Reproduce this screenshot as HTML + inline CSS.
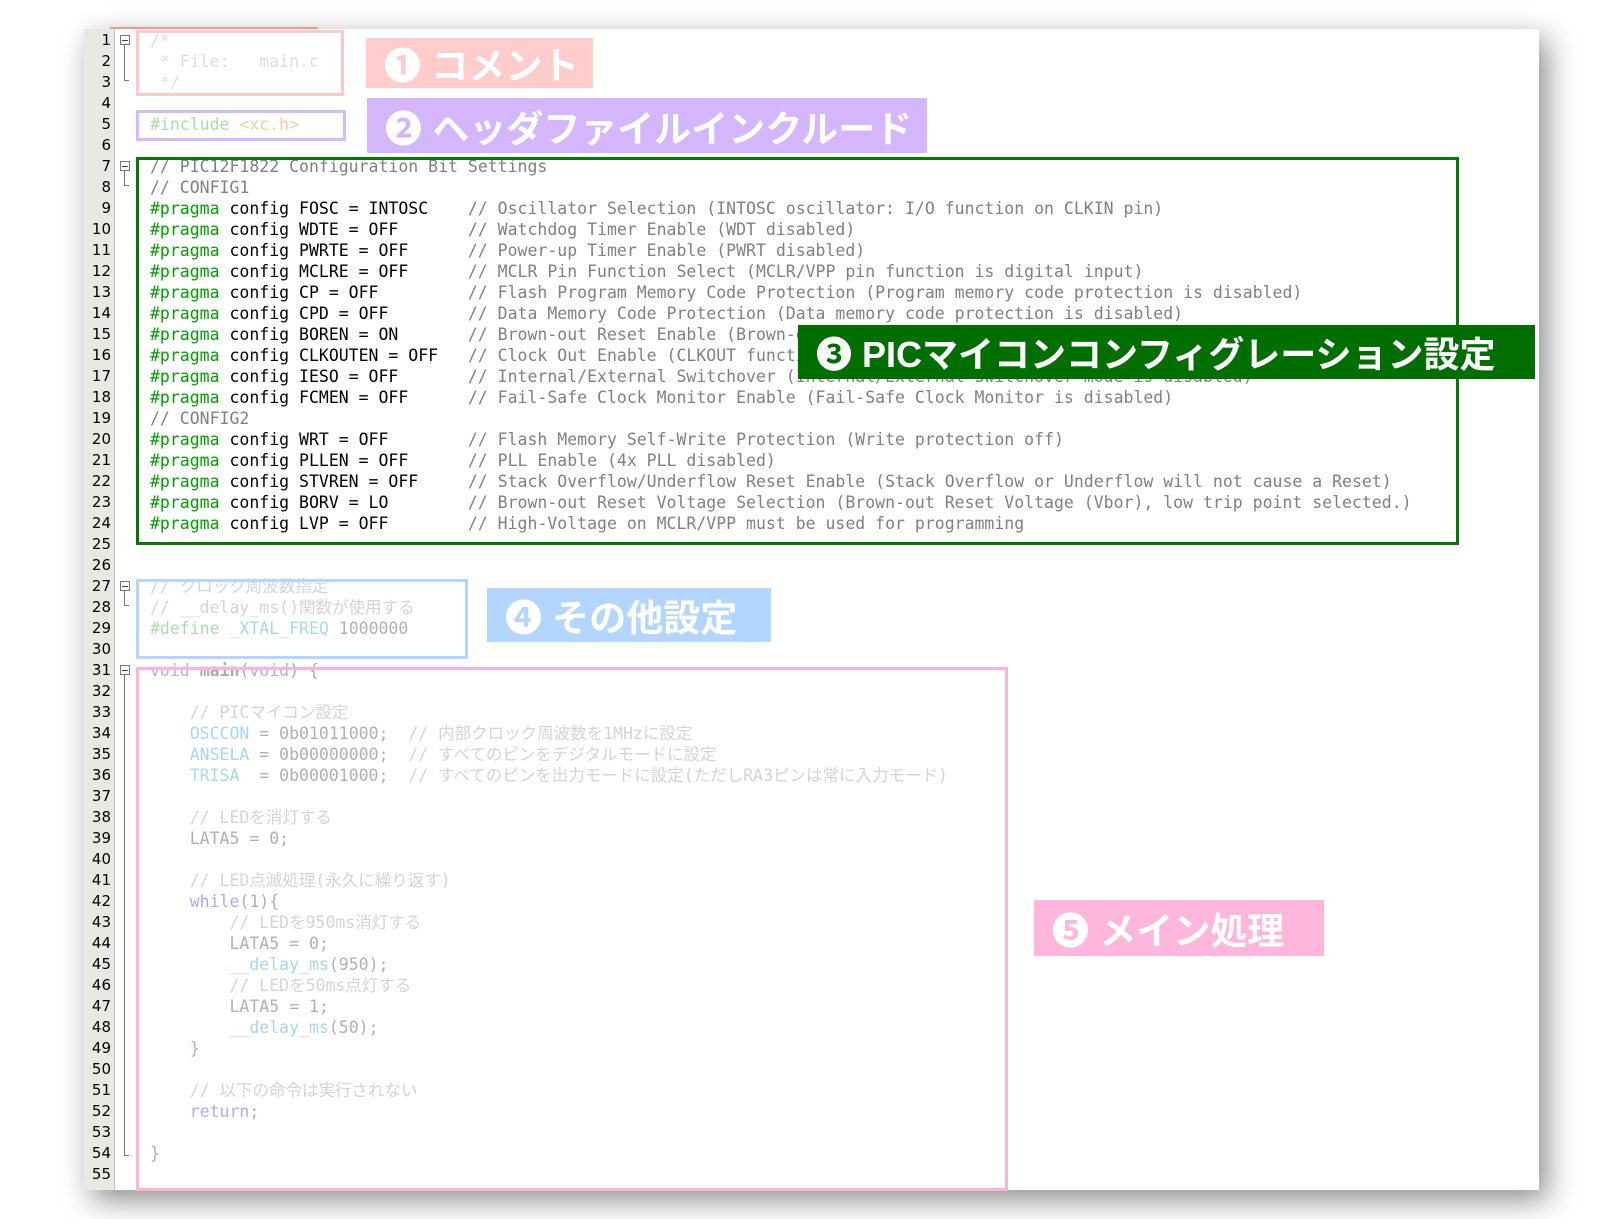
<!DOCTYPE html>
<html><head><meta charset="utf-8"><style>
body{margin:0;width:1624px;height:1219px;background:#fff;position:relative;overflow:hidden;font-family:"DejaVu Sans Mono","Liberation Mono","Noto Sans CJK JP",monospace}
.win{position:absolute;left:84px;top:29px;width:1455px;height:1161px;background:#fff;box-shadow:8px 10px 28px rgba(0,0,0,.45)}
.gut{position:absolute;left:84px;top:29px;width:30px;height:1161px;background:#e9e8e3;border-right:1px solid #c8c8c8}
.ln{position:absolute;left:84px;width:27px;text-align:right;font-size:15px;line-height:21px;color:#000;font-family:"DejaVu Sans",sans-serif}
.l{position:absolute;left:150px;font-size:16.5px;line-height:21px;white-space:pre;color:#000;font-family:"DejaVu Sans Mono","Noto Sans CJK JP",monospace}
.c{color:#808080}.p{color:#00a000}
.cm{position:absolute;left:32ch;color:#808080}
.f1{color:#ddd}.fg{color:#a8dca8}.fo{color:#f2cca4}.fk{color:#aaaaff}.fb{color:#aaa}.fi{color:#a8d6f2}.fn{color:#b0b0b0}.fc{color:#d4d4d4}
.box{position:absolute;box-sizing:border-box}
.lab{position:absolute;color:#fff;font-family:"Liberation Sans","Noto Sans CJK JP",sans-serif;font-weight:bold;font-size:37px;display:flex;align-items:center;padding-left:18px;box-sizing:border-box;white-space:nowrap}
.fold{position:absolute;left:120px;width:8px;height:8px;border:1px solid #777;background:#fff;font-size:8px}
.fold:after{content:"";position:absolute;left:1px;top:3.5px;width:6px;height:1px;background:#444}
.vl{position:absolute;left:124px;width:4px;border-left:1px solid #777;border-bottom:1px solid #777}
</style></head><body>
<div class="win"></div>
<div class="gut"></div>
<div style="position:absolute;left:110px;top:27px;width:208px;height:2px;background:#ff9090"></div>

<div class="ln" style="top:29.5px">1</div><div class="ln" style="top:50.5px">2</div><div class="ln" style="top:71.5px">3</div><div class="ln" style="top:92.5px">4</div><div class="ln" style="top:113.5px">5</div><div class="ln" style="top:134.5px">6</div><div class="ln" style="top:155.5px">7</div><div class="ln" style="top:176.5px">8</div><div class="ln" style="top:197.5px">9</div><div class="ln" style="top:218.5px">10</div><div class="ln" style="top:239.5px">11</div><div class="ln" style="top:260.5px">12</div><div class="ln" style="top:281.5px">13</div><div class="ln" style="top:302.5px">14</div><div class="ln" style="top:323.5px">15</div><div class="ln" style="top:344.5px">16</div><div class="ln" style="top:365.5px">17</div><div class="ln" style="top:386.5px">18</div><div class="ln" style="top:407.5px">19</div><div class="ln" style="top:428.5px">20</div><div class="ln" style="top:449.5px">21</div><div class="ln" style="top:470.5px">22</div><div class="ln" style="top:491.5px">23</div><div class="ln" style="top:512.5px">24</div><div class="ln" style="top:533.5px">25</div><div class="ln" style="top:554.5px">26</div><div class="ln" style="top:575.5px">27</div><div class="ln" style="top:596.5px">28</div><div class="ln" style="top:617.5px">29</div><div class="ln" style="top:638.5px">30</div><div class="ln" style="top:659.5px">31</div><div class="ln" style="top:680.5px">32</div><div class="ln" style="top:701.5px">33</div><div class="ln" style="top:722.5px">34</div><div class="ln" style="top:743.5px">35</div><div class="ln" style="top:764.5px">36</div><div class="ln" style="top:785.5px">37</div><div class="ln" style="top:806.5px">38</div><div class="ln" style="top:827.5px">39</div><div class="ln" style="top:848.5px">40</div><div class="ln" style="top:869.5px">41</div><div class="ln" style="top:890.5px">42</div><div class="ln" style="top:911.5px">43</div><div class="ln" style="top:932.5px">44</div><div class="ln" style="top:953.5px">45</div><div class="ln" style="top:974.5px">46</div><div class="ln" style="top:995.5px">47</div><div class="ln" style="top:1016.5px">48</div><div class="ln" style="top:1037.5px">49</div><div class="ln" style="top:1058.5px">50</div><div class="ln" style="top:1079.5px">51</div><div class="ln" style="top:1100.5px">52</div><div class="ln" style="top:1121.5px">53</div><div class="ln" style="top:1142.5px">54</div><div class="ln" style="top:1163.5px">55</div>

<div class="fold" style="top:35px"></div><div class="vl" style="top:45px;height:35px"></div>
<div class="fold" style="top:161px"></div><div class="vl" style="top:171px;height:14px"></div>
<div class="fold" style="top:581px"></div><div class="vl" style="top:591px;height:14px"></div>
<div class="fold" style="top:665px"></div><div class="vl" style="top:675px;height:480px"></div>

<div class="l f1" style="top:29.5px">/*</div>
<div class="l f1" style="top:50.5px"> * File:   main.c</div>
<div class="l f1" style="top:71.5px"> */</div>
<div class="l" style="top:113.5px"><span class="fg">#include</span> <span class="fo">&lt;xc.h&gt;</span></div>
<div class="l c" style="top:155.5px">// PIC12F1822 Configuration Bit Settings</div>
<div class="l c" style="top:176.5px">// CONFIG1</div>
<div class="l" style="top:197.5px"><span class="p">#pragma</span> config FOSC = INTOSC<span class="cm">// Oscillator Selection (INTOSC oscillator: I/O function on CLKIN pin)</span></div>
<div class="l" style="top:218.5px"><span class="p">#pragma</span> config WDTE = OFF<span class="cm">// Watchdog Timer Enable (WDT disabled)</span></div>
<div class="l" style="top:239.5px"><span class="p">#pragma</span> config PWRTE = OFF<span class="cm">// Power-up Timer Enable (PWRT disabled)</span></div>
<div class="l" style="top:260.5px"><span class="p">#pragma</span> config MCLRE = OFF<span class="cm">// MCLR Pin Function Select (MCLR/VPP pin function is digital input)</span></div>
<div class="l" style="top:281.5px"><span class="p">#pragma</span> config CP = OFF<span class="cm">// Flash Program Memory Code Protection (Program memory code protection is disabled)</span></div>
<div class="l" style="top:302.5px"><span class="p">#pragma</span> config CPD = OFF<span class="cm">// Data Memory Code Protection (Data memory code protection is disabled)</span></div>
<div class="l" style="top:323.5px"><span class="p">#pragma</span> config BOREN = ON<span class="cm">// Brown-out Reset Enable (Brown-out Reset enabled)</span></div>
<div class="l" style="top:344.5px"><span class="p">#pragma</span> config CLKOUTEN = OFF<span class="cm">// Clock Out Enable (CLKOUT function is disabled)</span></div>
<div class="l" style="top:365.5px"><span class="p">#pragma</span> config IESO = OFF<span class="cm">// Internal/External Switchover (Internal/External Switchover mode is disabled)</span></div>
<div class="l" style="top:386.5px"><span class="p">#pragma</span> config FCMEN = OFF<span class="cm">// Fail-Safe Clock Monitor Enable (Fail-Safe Clock Monitor is disabled)</span></div>
<div class="l c" style="top:407.5px">// CONFIG2</div>
<div class="l" style="top:428.5px"><span class="p">#pragma</span> config WRT = OFF<span class="cm">// Flash Memory Self-Write Protection (Write protection off)</span></div>
<div class="l" style="top:449.5px"><span class="p">#pragma</span> config PLLEN = OFF<span class="cm">// PLL Enable (4x PLL disabled)</span></div>
<div class="l" style="top:470.5px"><span class="p">#pragma</span> config STVREN = OFF<span class="cm">// Stack Overflow/Underflow Reset Enable (Stack Overflow or Underflow will not cause a Reset)</span></div>
<div class="l" style="top:491.5px"><span class="p">#pragma</span> config BORV = LO<span class="cm">// Brown-out Reset Voltage Selection (Brown-out Reset Voltage (Vbor), low trip point selected.)</span></div>
<div class="l" style="top:512.5px"><span class="p">#pragma</span> config LVP = OFF<span class="cm">// High-Voltage on MCLR/VPP must be used for programming</span></div>

<div class="l fc" style="top:575.5px">// クロック周波数指定</div>
<div class="l fc" style="top:596.5px">// __delay_ms()関数が使用する</div>
<div class="l" style="top:617.5px"><span class="fg">#define</span> <span class="fi">_XTAL_FREQ</span> <span class="fn">1000000</span></div>

<div class="l" style="top:659.5px"><span class="fk">void</span> <b class="fb">main</b><span class="fb">(</span><span class="fk">void</span><span class="fb">) {</span></div>
<div class="l fc" style="top:701.5px">    // PICマイコン設定</div>
<div class="l fn" style="top:722.5px">    <span class="fi">OSCCON</span> = 0b01011000;  <span class="fc">// 内部クロック周波数を1MHzに設定</span></div>
<div class="l fn" style="top:743.5px">    <span class="fi">ANSELA</span> = 0b00000000;  <span class="fc">// すべてのピンをデジタルモードに設定</span></div>
<div class="l fn" style="top:764.5px">    <span class="fi">TRISA</span>  = 0b00001000;  <span class="fc">// すべてのピンを出力モードに設定(ただしRA3ピンは常に入力モード)</span></div>
<div class="l fc" style="top:806.5px">    // LEDを消灯する</div>
<div class="l fn" style="top:827.5px">    LATA5 = 0;</div>
<div class="l fc" style="top:869.5px">    // LED点滅処理(永久に繰り返す)</div>
<div class="l fn" style="top:890.5px">    <span class="fk">while</span>(1){</div>
<div class="l fc" style="top:911.5px">        // LEDを950ms消灯する</div>
<div class="l fn" style="top:932.5px">        LATA5 = 0;</div>
<div class="l fn" style="top:953.5px">        <span class="fi">__delay_ms</span>(950);</div>
<div class="l fc" style="top:974.5px">        // LEDを50ms点灯する</div>
<div class="l fn" style="top:995.5px">        LATA5 = 1;</div>
<div class="l fn" style="top:1016.5px">        <span class="fi">__delay_ms</span>(50);</div>
<div class="l fn" style="top:1037.5px">    }</div>
<div class="l fc" style="top:1079.5px">    // 以下の命令は実行されない</div>
<div class="l fn" style="top:1100.5px">    <span class="fk">return</span>;</div>
<div class="l fn" style="top:1142.5px">}</div>

<div class="box" style="left:136px;top:30px;width:208px;height:66px;border:3px solid #ffc8c8"></div>
<div class="box" style="left:136px;top:110px;width:210px;height:31px;border:3px solid #d6b8ff"></div>
<div class="box" style="left:136px;top:157px;width:1323px;height:388px;border:3px solid #007a00"></div>
<div class="box" style="left:136px;top:579px;width:332px;height:80px;border:3px solid #b2d6ff"></div>
<div class="box" style="left:136px;top:667px;width:872px;height:524px;border:3px solid #ffb2d8"></div>

<div class="lab" style="left:366px;top:38px;width:227px;height:50px;background:#ffcccc">❶ コメント</div>
<div class="lab" style="left:367px;top:98px;width:560px;height:55px;background:#d4b6fc">❷ ヘッダファイルインクルード</div>
<div class="lab" style="left:798px;top:325px;width:737px;height:54px;background:#006f00;font-size:36px">❸ PICマイコンコンフィグレーション設定</div>
<div class="lab" style="left:487px;top:588px;width:284px;height:54px;background:#b2d6ff">❹ その他設定</div>
<div class="lab" style="left:1034px;top:900px;width:290px;height:56px;background:#ffb6dc">❺ メイン処理</div>
</body></html>
